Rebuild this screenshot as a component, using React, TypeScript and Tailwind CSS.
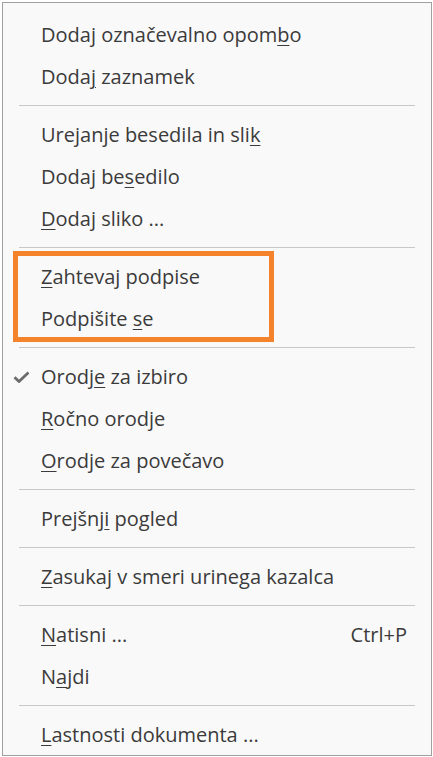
import React from 'react'

type Item = {
  before: string
  key: string
  after: string
  shortcut?: string
  checked?: boolean
}

const MenuRow: React.FunctionComponent<{ item: Item }> = ({ item }) => {
  return (
    <div className="relative flex h-[42px] items-center pl-[38px] pr-[24px]">
      {item.checked && (
        <svg
          className="absolute left-[10px] top-[15px]"
          width="17"
          height="12"
          viewBox="0 0 17 12"
        >
          <path
            d="M1.5 6.2 L6 10.5 L15.5 1.5"
            fill="none"
            stroke="#6b6b6b"
            strokeWidth="2.8"
          />
        </svg>
      )}
      <span className="flex-1 whitespace-nowrap">
        {item.before}
        <span className="underline decoration-1 underline-offset-[3px]">
          {item.key}
        </span>
        {item.after}
      </span>
      {item.shortcut && <span>{item.shortcut}</span>}
    </div>
  )
}

const Separator: React.FunctionComponent = () => (
  <div className="px-[16px] pt-[7px] pb-[8px]">
    <div className="h-px bg-[#c8c8c8]" />
  </div>
)

const App: React.FunctionComponent = () => {
  return (
    <div className="h-[757px] w-[433px] overflow-hidden bg-white pl-[2px] pt-[2px]">
      <div
        className="h-[754px] w-[430px] overflow-hidden border border-[#a0a0a0] bg-[#f9f9f9] pt-[11px] text-[20px] text-[#3b3b3b]"
        style={{ fontFamily: '"Open Sans", "Noto Sans", sans-serif' }}
      >
        <MenuRow item={{ before: 'Dodaj označevalno opom', key: 'b', after: 'o' }} />
        <MenuRow item={{ before: 'Doda', key: 'j', after: ' zaznamek' }} />
        <Separator />
        <MenuRow item={{ before: 'Urejanje besedila in sli', key: 'k', after: '' }} />
        <MenuRow item={{ before: 'Dodaj be', key: 's', after: 'edilo' }} />
        <MenuRow item={{ before: '', key: 'D', after: 'odaj sliko ...' }} />
        <Separator />
        <div className="relative">
          <div className="pointer-events-none absolute -top-[5px] -bottom-[2px] left-[10px] w-[261px] border-[5px] border-[#f5832b]" />
          <MenuRow item={{ before: '', key: 'Z', after: 'ahtevaj podpise' }} />
          <MenuRow item={{ before: 'Podpišite ', key: 's', after: 'e' }} />
        </div>
        <Separator />
        <MenuRow item={{ before: 'Orodj', key: 'e', after: ' za izbiro', checked: true }} />
        <MenuRow item={{ before: '', key: 'R', after: 'očno orodje' }} />
        <MenuRow item={{ before: '', key: 'O', after: 'rodje za povečavo' }} />
        <Separator />
        <MenuRow item={{ before: 'Prejšnj', key: 'i', after: ' pogled' }} />
        <Separator />
        <MenuRow item={{ before: '', key: 'Z', after: 'asukaj v smeri urinega kazalca' }} />
        <Separator />
        <MenuRow item={{ before: '', key: 'N', after: 'atisni ...', shortcut: 'Ctrl+P' }} />
        <MenuRow item={{ before: 'N', key: 'a', after: 'jdi' }} />
        <Separator />
        <MenuRow item={{ before: '', key: 'L', after: 'astnosti dokumenta ...' }} />
      </div>
    </div>
  )
}

export default App
